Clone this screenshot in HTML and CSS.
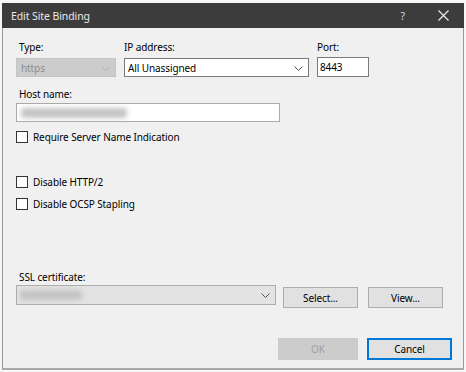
FILE: index.html
```html
<!DOCTYPE html>
<html lang="en">
<head>
    <meta charset="UTF-8">
    <title>Edit Site Binding</title>
    <link rel="stylesheet" href="styles.css">
</head>
<body>
    <div class="dialog">
        <div class="titlebar">
            <span class="title">Edit Site Binding</span>
            <span class="help">?</span>
            <svg class="close" width="11" height="11" viewBox="0 0 11 11">
                <path d="M0.5 0.5 L10.5 10.5 M10.5 0.5 L0.5 10.5" stroke="#eee" stroke-width="1.2" fill="none"/>
            </svg>
        </div>

        <div class="content">
            <div class="binding-grid">
                <label class="indent">Type:</label>
                <label>IP address:</label>
                <label>Port:</label>

                <div class="combo disabled">
                    <span>https</span>
                    <svg class="chevron" width="9" height="5" viewBox="0 0 9 5"><polyline points="0.5,0.5 4.5,4.5 8.5,0.5" stroke="#b0b0b0" fill="none"/></svg>
                </div>
                <div class="combo editable">
                    <span>All Unassigned</span>
                    <svg class="chevron" width="9" height="5" viewBox="0 0 9 5"><polyline points="0.5,0.5 4.5,4.5 8.5,0.5" stroke="#555" fill="none"/></svg>
                </div>
                <div class="textbox port">8443</div>
            </div>

            <label class="field-label indent">Host name:</label>
            <div class="textbox host"><span class="redacted host-blur"></span></div>

            <div class="check first"><span class="box"></span>Require Server Name Indication</div>
            <div class="check spaced"><span class="box"></span>Disable HTTP/2</div>
            <div class="check"><span class="box"></span>Disable OCSP Stapling</div>

            <label class="field-label indent ssl-label">SSL certificate:</label>
            <div class="ssl-row">
                <div class="combo list">
                    <span class="redacted ssl-blur"></span>
                    <svg class="chevron" width="9" height="5" viewBox="0 0 9 5"><polyline points="0.5,0.5 4.5,4.5 8.5,0.5" stroke="#555" fill="none"/></svg>
                </div>
                <button class="btn">Select...</button>
                <button class="btn view">View...</button>
            </div>

            <div class="footer">
                <button class="btn ok" disabled>OK</button>
                <button class="btn cancel">Cancel</button>
            </div>
        </div>
    </div>
</body>
</html>
```

FILE: styles.css
```css
body {
    margin: 0;
    background-color: #f7f7f7;
    font-family: 'Segoe UI', 'Noto Sans', sans-serif;
    font-size: 10px;
    letter-spacing: -0.1px;
    color: #000;
}
.dialog {
    margin: 3px 0 0 2px;
    width: 462px;
    height: 367px;
    box-sizing: border-box;
    background-color: #f0f0f0;
    border: 1px solid #9a9a9a;
    border-top: none;
    border-bottom: 2px solid #a8a8a8;
}
.titlebar {
    height: 25px;
    margin: 0 -1px;
    background-color: #3c3c3c;
    color: #e8e8e8;
    display: flex;
    align-items: center;
    padding-left: 9px;
    font-size: 10.5px;
}
.title {
    flex: 1;
}
.help {
    margin-right: 33px;
    font-size: 10.5px;
    color: #ddd;
}
.close {
    margin-right: 15px;
}
.content {
    padding: 12px 11px 0 13px;
}
label {
    display: block;
    line-height: 14px;
    height: 14px;
}
.indent {
    padding-left: 3px;
}
.binding-grid {
    display: grid;
    grid-template-columns: 100px 185px 52px;
    column-gap: 8px;
    row-gap: 4px;
}
.combo, .textbox {
    height: 19px;
    box-sizing: border-box;
    display: flex;
    align-items: center;
    padding-left: 3px;
    position: relative;
}
.combo .chevron {
    position: absolute;
    right: 5px;
    top: 7px;
}
.disabled {
    background-color: #cccccc;
    border: 1px solid #c4c4c4;
    color: #8c8c8c;
    padding-left: 4px;
}
.editable {
    background-color: #fff;
    border: 1px solid #7a7a7a;
}
.textbox {
    background-color: #fff;
    border: 1px solid #7a7a7a;
    padding-left: 2px;
}
.port {
    height: 20px;
    margin-top: -1px;
}
.field-label {
    margin-top: 10px;
    margin-bottom: 2px;
}
.host {
    width: 264px;
    border-color: #aaa;
}
.redacted {
    display: block;
    height: 10px;
    background-color: #c4c4c4;
    filter: blur(2.5px);
    border-radius: 3px;
}
.host-blur {
    width: 106px;
    margin-left: 2px;
}
.ssl-blur {
    width: 62px;
}
.check {
    display: flex;
    align-items: center;
    height: 14px;
    margin-top: 8px;
}
.check.first {
    margin-top: 8px;
}
.check.spaced {
    margin-top: 31px;
}
.box {
    width: 10px;
    height: 10px;
    border: 1px solid #333;
    background-color: #fff;
    margin-right: 5px;
}
.ssl-label {
    margin-top: 59px;
    margin-bottom: 1px;
}
.ssl-row {
    display: flex;
    align-items: flex-start;
}
.list {
    width: 260px;
    height: 20px;
    background-color: #e3e3e3;
    border: 1px solid #adadad;
}
.btn {
    font-family: inherit;
    font-size: 10px;
    letter-spacing: -0.1px;
    color: #000;
    background-color: #e1e1e1;
    border: 1px solid #adadad;
    height: 21px;
    width: 75px;
    padding: 0;
    margin: 2px 0 0 7px;
}
.view {
    margin-left: 10px;
}
.footer {
    display: flex;
    justify-content: flex-end;
    margin-top: 30px;
}
.ok {
    width: 80px;
    height: 22px;
    margin: 0;
    background-color: #cccccc;
    border-color: #cccccc;
    color: #a0a0a0;
}
.cancel {
    width: 85px;
    height: 22px;
    margin: 0 0 0 9px;
    border: 2px solid #0078d7;
}
```
